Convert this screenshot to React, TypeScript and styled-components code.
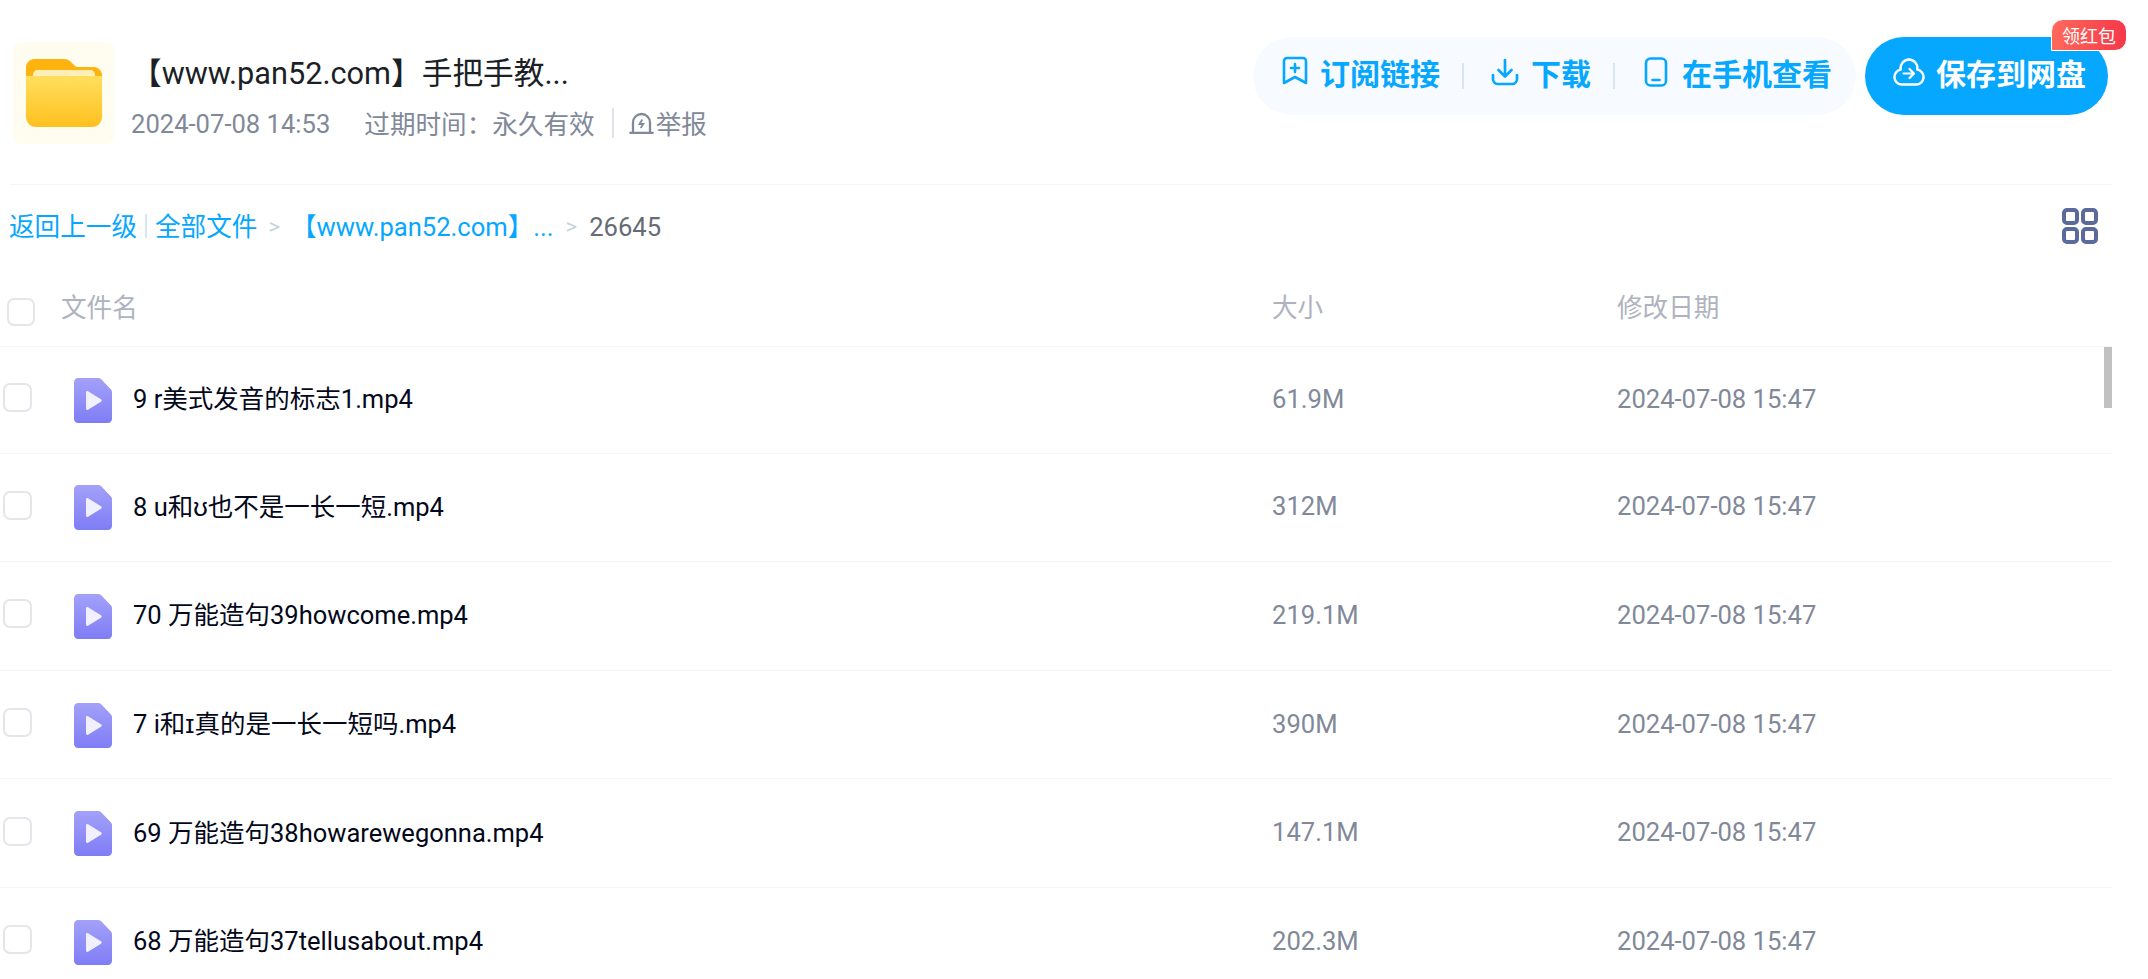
import React from "react"
import styled, { createGlobalStyle } from "styled-components"

const files = [
  { name: "9 r美式发音的标志1.mp4", size: "61.9M" },
  { name: "8 u和ʊ也不是一长一短.mp4", size: "312M" },
  { name: "70 万能造句39howcome.mp4", size: "219.1M" },
  { name: "7 i和ɪ真的是一长一短吗.mp4", size: "390M" },
  { name: "69 万能造句38howarewegonna.mp4", size: "147.1M" },
  { name: "68 万能造句37tellusabout.mp4", size: "202.3M" },
]

function FolderIcon() {
  return (
    <svg width="76" height="68" viewBox="0 0 76 68">
      <defs>
        <linearGradient id="folderFront" x1="0" y1="0" x2="0" y2="1">
          <stop offset="0" stopColor="#ffdf5e" />
          <stop offset="1" stopColor="#ffc01f" />
        </linearGradient>
      </defs>
      <path d="M8 0h30c3 0 5 1 7 3l3 3c1 1 2 2 4 2h16c4 0 8 4 8 8v20H0V8c0-4 4-8 8-8z" fill="#ffb30f" />
      <path d="M12 11h52c3 0 5 2 5 5v6H7v-6c0-3 2-5 5-5z" fill="#ffeeb8" />
      <path d="M0 17h76v41c0 5-4 10-10 10H10C4 68 0 63 0 58z" fill="url(#folderFront)" />
    </svg>
  )
}

function ReportIcon() {
  return (
    <svg width="25" height="24" viewBox="0 0 25 24" fill="none" stroke="#818999" strokeWidth="2.3">
      <path d="M4 22V11.500a8.500 8.500 0 0 1 17 0V22" />
      <path d="M1.200 21.800h22.600" strokeLinecap="round" />
      <path d="M13.300 8.500l-2.800 4.500h3.800l-2.600 4" strokeWidth="1.800" />
    </svg>
  )
}

function BookmarkIcon() {
  return (
    <BookmarkSvg width="26" height="30" viewBox="0 0 26 30" fill="none" stroke="#06a7ff" strokeWidth="2.6" strokeLinejoin="round" strokeLinecap="round">
      <path d="M5 2h16a3 3 0 0 1 3 3v22l-11-6-11 6V5a3 3 0 0 1 3-3z" />
      <path d="M13 8v8M9 12h8" />
    </BookmarkSvg>
  )
}

function DownloadIcon() {
  return (
    <svg width="28" height="28" viewBox="0 0 28 28" fill="none" stroke="#06a7ff" strokeWidth="2.7" strokeLinejoin="round" strokeLinecap="round">
      <path d="M14 2v16M7.500 12l6.500 6.500 6.500-6.500" />
      <path d="M2 17v4a5 5 0 0 0 5 5h14a5 5 0 0 0 5-5v-4" />
    </svg>
  )
}

function PhoneIcon() {
  return (
    <svg width="28" height="30" viewBox="0 0 28 30" fill="none" stroke="#06a7ff" strokeWidth="2.6" strokeLinecap="round">
      <rect x="4" y="1.500" width="20" height="27" rx="4.500" />
      <path d="M10.500 23h7" />
    </svg>
  )
}

function CloudIcon() {
  return (
    <svg width="32" height="28" viewBox="0 0 32 28" fill="none" stroke="#fff" strokeWidth="2.4" strokeLinecap="round" strokeLinejoin="round">
      <path d="M9 26.500a7.500 7.500 0 0 1-1.300-14.900A8.600 8.600 0 0 1 16 1.500a8.600 8.600 0 0 1 8.300 10.100A7.500 7.500 0 0 1 23 26.500z" />
      <path d="M10.500 15.500h10M16.500 11l4.500 4.500-4.500 4.500" strokeWidth="2.2" />
    </svg>
  )
}

function GridIcon() {
  return (
    <svg width="36" height="36" viewBox="0 0 36 36" fill="none" stroke="#5b6a9a" strokeWidth="4">
      <rect x="2" y="2" width="13" height="13" rx="3" />
      <rect x="21" y="2" width="13" height="13" rx="3" />
      <rect x="2" y="21" width="13" height="13" rx="3" />
      <rect x="21" y="21" width="13" height="13" rx="3" />
    </svg>
  )
}

function VideoIcon({ id }: { id: number }) {
  return (
    <svg width="38" height="45" viewBox="0 0 38 45">
      <defs>
        <linearGradient id={"video" + id} x1="0" y1="0" x2="0" y2="1">
          <stop offset="0" stopColor="#a3a1f9" />
          <stop offset="1" stopColor="#7f7df5" />
        </linearGradient>
      </defs>
      <path d="M4 0h20c1.500 0 2.500.5 3.500 1.500l9 9.500c1 1 1.500 2 1.500 3.500V41c0 2-2 4-4 4H4c-2 0-4-2-4-4V4c0-2 2-4 4-4z" fill={`url(#video${id})`} />
      <path d="M12 14.500c0-1.200 1-1.700 2-1.200l13 8c1 .6 1 1.800 0 2.400l-13 8c-1 .5-2 0-2-1.200z" fill="#f1f0ff" />
    </svg>
  )
}

export default function App() {
  return (
    <Page>
      <GlobalStyle />
      <Header>
        <FolderTile>
          <FolderIcon />
        </FolderTile>
        <Info>
          <Title>【www.pan52.com】手把手教...</Title>
          <Meta>
            <span>2024-07-08 14:53</span>
            <Expire>过期时间：永久有效</Expire>
            <Report>
              <ReportIcon />
              举报
            </Report>
          </Meta>
        </Info>
        <Actions>
          <Action>
            <BookmarkIcon />
            订阅链接
          </Action>
          <ActionLine />
          <Action>
            <DownloadIcon />
            下载
          </Action>
          <ActionLine />
          <Action>
            <PhoneIcon />
            在手机查看
          </Action>
        </Actions>
        <SaveButton>
          <CloudIcon />
          保存到网盘
          <Badge>领红包</Badge>
        </SaveButton>
      </Header>
      <Crumbs>
        <CrumbLink>返回上一级</CrumbLink>
        <CrumbLine />
        <CrumbLink>全部文件</CrumbLink>
        <CrumbArrow>&gt;</CrumbArrow>
        <CrumbLink>【www.pan52.com】...</CrumbLink>
        <CrumbArrow $last>&gt;</CrumbArrow>
        <CrumbCurrent>26645</CrumbCurrent>
        <GridButton>
          <GridIcon />
        </GridButton>
      </Crumbs>
      <TableHead>
        <HeadCheck />
        <HeadName>文件名</HeadName>
        <HeadSize>大小</HeadSize>
        <span>修改日期</span>
      </TableHead>
      <List>
        {files.map((f, i) => (
          <Row key={f.name}>
            <RowCheck />
            <FileIcon>
              <VideoIcon id={i} />
            </FileIcon>
            <FileName>{f.name}</FileName>
            <FileSize>{f.size}</FileSize>
            <FileDate>2024-07-08 15:47</FileDate>
          </Row>
        ))}
        <Scrollbar />
      </List>
    </Page>
  )
}

const GlobalStyle = createGlobalStyle`
  html, body {
    margin: 0;
    padding: 0;
    height: 979px;
    background: #fff;
    overflow: hidden;
  }
  * {
    box-sizing: border-box;
  }
`

const Page = styled.div`
  width: 2112px;
  height: 979px;
  font-family: Roboto, "Noto Sans CJK SC", sans-serif;
  font-size: 25.6px;
  color: #03081a;
`

const Header = styled.div`
  display: flex;
  align-items: flex-start;
  height: 185px;
  margin-left: 10px;
  padding: 37px 0 0 3px;
  border-bottom: 1px solid #f5f6f8;
`

const FolderTile = styled.div`
  display: flex;
  align-items: center;
  justify-content: center;
  width: 101px;
  height: 102px;
  margin-top: 5px;
  background: #fffcf0;
  border-radius: 8px;
`

const Info = styled.div`
  flex: 1;
  padding: 15px 0 0 17px;
`

const Title = styled.div`
  font-size: 30.7px;
  line-height: 44px;
  color: #1c1f26;
`

const Meta = styled.div`
  display: flex;
  align-items: center;
  height: 36px;
  margin-top: 10px;
  color: #818999;
`

const Expire = styled.span`
  margin-left: 34px;
  margin-bottom: 3px;
`

const Report = styled.span`
  display: flex;
  align-items: center;
  gap: 2px;
  margin-left: 17px;
  margin-bottom: 3px;
  padding-left: 15px;
  height: 30px;
  border-left: 2px solid #dfe2e8;
`

const Actions = styled.div`
  display: flex;
  align-items: center;
  width: 603px;
  height: 78px;
  padding-left: 29px;
  background: #f7fafe;
  border-radius: 39px;
`

const Action = styled.div`
  display: flex;
  align-items: center;
  gap: 12px;
  padding-bottom: 8px;
  font-size: 30px;
  font-weight: 700;
  color: #06a7ff;
`

const BookmarkSvg = styled.svg`
  margin-bottom: 2px;
`

const ActionLine = styled.div`
  width: 2px;
  height: 26px;
  margin: 0 27px 0 22px;
  background: #d7e6f2;
`

const SaveButton = styled.div`
  position: relative;
  display: flex;
  align-items: center;
  justify-content: center;
  gap: 11px;
  width: 243px;
  height: 78px;
  margin-left: 9px;
  margin-right: 4px;
  padding: 0 0 8px 6px;
  background: #06a7ff;
  border-radius: 39px;
  color: #fff;
  font-size: 30px;
  font-weight: 700;
`

const Badge = styled.div`
  position: absolute;
  top: -18px;
  right: -19px;
  display: flex;
  align-items: center;
  justify-content: center;
  width: 76px;
  height: 32px;
  background: linear-gradient(90deg, #ff6a5b, #f5384a);
  border: 1px solid #fff;
  border-radius: 12px 12px 12px 0;
  font-size: 18px;
  font-weight: 400;
`

const Crumbs = styled.div`
  display: flex;
  align-items: center;
  height: 82px;
  padding-left: 9px;
`

const CrumbLink = styled.span`
  margin-bottom: 3px;
  color: #06a7ff;
`

const CrumbLine = styled.span`
  width: 2px;
  height: 24px;
  margin: 0 8px;
  background: #d7e6f2;
`

const CrumbArrow = styled.span<{ $last?: boolean }>`
  margin: ${(p) => (p.$last ? "0 12px 0 12px" : "0 11px 0 11px")};
  color: #c4d4e2;
  font-size: 22px;
`

const CrumbCurrent = styled.span`
  margin-top: 2px;
  color: #666b75;
`

const GridButton = styled.div`
  display: flex;
  margin-left: auto;
  margin-right: 14px;
`

const TableHead = styled.div`
  display: flex;
  align-items: center;
  height: 80px;
  padding-bottom: 3px;
  border-bottom: 1px solid #f5f6f8;
  color: #afb3bf;
`

const HeadCheck = styled.div`
  width: 28px;
  height: 28px;
  margin: 13px 26px 0 7px;
  border: 2px solid #e4e6ea;
  border-radius: 7px;
`

const HeadName = styled.span`
  width: 1211px;
`

const HeadSize = styled.span`
  width: 345px;
`

const List = styled.div`
  position: relative;
`

const Scrollbar = styled.div`
  position: absolute;
  top: 0;
  right: 0;
  width: 8px;
  height: 61px;
  background: #c1c1c1;
`

const Row = styled.div`
  display: flex;
  align-items: center;
  height: 108.6px;
  border-bottom: 1px solid #f5f6f8;
  &:first-child {
    height: 106.6px;
  }
`

const RowCheck = styled.div`
  width: 29px;
  height: 29px;
  margin: 0 42px 4px 3px;
  border: 2px solid #e4e6ea;
  border-radius: 7px;
`

const FileIcon = styled.div`
  display: flex;
  width: 59px;
  margin-top: 1px;
`

const FileName = styled.span`
  width: 1139px;
  margin-bottom: 6px;
  font-size: 25.5px;
`

const FileSize = styled.span`
  width: 345px;
  margin-bottom: 2px;
  color: #818999;
`

const FileDate = styled.span`
  margin-bottom: 2px;
  color: #818999;
`
